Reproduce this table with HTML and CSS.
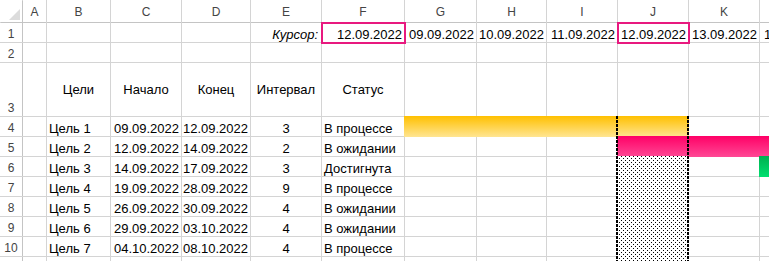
FILE: index.html
```html
<!DOCTYPE html>
<html lang="ru">
<head>
<meta charset="utf-8">
<title>Диаграмма Ганта</title>
<link rel="stylesheet" href="styles.css">
</head>
<body>
<div class="stack">
  <div class="sheet">
    <div class="c corner"><svg width="22" height="22" viewBox="0 0 22 22"><polygon points="9,20 20,20 20,9" fill="#dcdcdc"/></svg></div>
    <div class="c hd">A</div><div class="c hd">B</div><div class="c hd">C</div><div class="c hd">D</div><div class="c hd">E</div><div class="c hd">F</div><div class="c hd">G</div><div class="c hd">H</div><div class="c hd">I</div><div class="c hd">J</div><div class="c hd">K</div><div class="c hd">L</div>

    <div class="c rh">1</div><div class="c"></div><div class="c"></div><div class="c"></div><div class="c"></div>
    <div class="c r i">Курсор:</div><div class="c r sel">12.09.2022</div><div class="c r">09.09.2022</div><div class="c r">10.09.2022</div><div class="c r">11.09.2022</div><div class="c r sel">12.09.2022</div><div class="c r">13.09.2022</div><div class="c r">14.09.2022</div>

    <div class="c rh">2</div><div class="c"></div><div class="c"></div><div class="c"></div><div class="c"></div><div class="c"></div><div class="c"></div><div class="c"></div><div class="c"></div><div class="c"></div><div class="c"></div><div class="c"></div><div class="c"></div>

    <div class="c rh">3</div><div class="c"></div><div class="c ctr mid">Цели</div><div class="c ctr mid">Начало</div><div class="c ctr mid">Конец</div><div class="c ctr mid">Интервал</div><div class="c ctr mid">Статус</div><div class="c"></div><div class="c"></div><div class="c"></div><div class="c"></div><div class="c"></div><div class="c"></div>

    <div class="c rh">4</div><div class="c"></div><div class="c">Цель 1</div><div class="c r">09.09.2022</div><div class="c r">12.09.2022</div><div class="c ctr">3</div><div class="c">В процессе</div><div class="c"></div><div class="c"></div><div class="c"></div><div class="c"></div><div class="c"></div><div class="c"></div>

    <div class="c rh">5</div><div class="c"></div><div class="c">Цель 2</div><div class="c r">12.09.2022</div><div class="c r">14.09.2022</div><div class="c ctr">2</div><div class="c">В ожидании</div><div class="c"></div><div class="c"></div><div class="c"></div><div class="c"></div><div class="c"></div><div class="c"></div>

    <div class="c rh">6</div><div class="c"></div><div class="c">Цель 3</div><div class="c r">14.09.2022</div><div class="c r">17.09.2022</div><div class="c ctr">3</div><div class="c">Достигнута</div><div class="c"></div><div class="c"></div><div class="c"></div><div class="c"></div><div class="c"></div><div class="c"></div>

    <div class="c rh">7</div><div class="c"></div><div class="c">Цель 4</div><div class="c r">19.09.2022</div><div class="c r">28.09.2022</div><div class="c ctr">9</div><div class="c">В процессе</div><div class="c"></div><div class="c"></div><div class="c"></div><div class="c"></div><div class="c"></div><div class="c"></div>

    <div class="c rh">8</div><div class="c"></div><div class="c">Цель 5</div><div class="c r">26.09.2022</div><div class="c r">30.09.2022</div><div class="c ctr">4</div><div class="c">В ожидании</div><div class="c"></div><div class="c"></div><div class="c"></div><div class="c"></div><div class="c"></div><div class="c"></div>

    <div class="c rh">9</div><div class="c"></div><div class="c">Цель 6</div><div class="c r">29.09.2022</div><div class="c r">03.10.2022</div><div class="c ctr">4</div><div class="c">В ожидании</div><div class="c"></div><div class="c"></div><div class="c"></div><div class="c"></div><div class="c"></div><div class="c"></div>

    <div class="c rh">10</div><div class="c"></div><div class="c">Цель 7</div><div class="c r">04.10.2022</div><div class="c r">08.10.2022</div><div class="c ctr">4</div><div class="c">В процессе</div><div class="c"></div><div class="c"></div><div class="c"></div><div class="c"></div><div class="c"></div><div class="c"></div>

    <div class="c rh"></div><div class="c"></div><div class="c"></div><div class="c"></div><div class="c"></div><div class="c"></div><div class="c"></div><div class="c"></div><div class="c"></div><div class="c"></div><div class="c"></div><div class="c"></div><div class="c"></div>
  </div>

  <div class="overlay">
    <div class="bar bar-yellow"></div>
    <div class="bar bar-pink"></div>
    <div class="bar bar-green"></div>
    <div class="dots">
      <svg class="dots-svg" width="100%" height="100%" shape-rendering="crispEdges">
        <defs>
          <pattern id="p125" width="4" height="4" patternUnits="userSpaceOnUse">
            <rect x="0" y="0" width="1" height="1" fill="#000"/>
            <rect x="2" y="2" width="1" height="1" fill="#000"/>
          </pattern>
        </defs>
        <rect width="100%" height="100%" fill="#fff"/>
        <rect width="100%" height="100%" fill="url(#p125)"/>
      </svg>
    </div>
    <div class="dash"></div>
  </div>
</div>
</body>
</html>
```

FILE: styles.css
```css
html, body {
  margin: 0;
  padding: 0;
  background: #fff;
  overflow: hidden;
}

body {
  width: 769px;
  height: 261px;
  font-family: "Liberation Sans", Arial, sans-serif;
}

.stack {
  display: grid;
  width: max-content;
}

.sheet,
.overlay {
  grid-area: 1 / 1;
  display: grid;
  grid-template-columns: 22px 23px 63px 70px 68px 70px 82px 71px 69px 70px 70px 70px 71px;
  grid-template-rows: 22px 19px 19px 53px repeat(8, 19px);
  gap: 1px;
}

.sheet {
  background: #d4d4d4;
}

.overlay {
  pointer-events: none;
}

.c {
  background: #fff;
  font-size: 13px;
  line-height: 15px;
  color: #000;
  display: flex;
  align-items: flex-end;
  justify-content: flex-start;
  padding: 0 2px;
  white-space: nowrap;
  min-width: 0;
}

.r { justify-content: flex-end; }
.ctr { justify-content: center; }
.mid { align-items: center; }
.i { font-style: italic; padding-right: 3px; }

.corner {
  padding: 0;
  align-items: stretch;
  box-shadow: 1px 1px 0 #c4c4c4;
}

.hd {
  color: #444;
  font-size: 12px;
  justify-content: center;
  padding-bottom: 2px;
  box-shadow: 0 1px 0 #c4c4c4;
}

.rh {
  color: #444;
  font-size: 12px;
  justify-content: center;
  box-shadow: 1px 0 0 #c4c4c4;
}

.sel {
  position: relative;
}

.sel::after {
  content: "";
  position: absolute;
  left: -1px;
  top: -1px;
  right: -2px;
  bottom: -2px;
  border: 2px solid #e8197f;
  z-index: 2;
}

.bar {
  margin: -1px;
}

.bar-yellow {
  grid-row: 5;
  grid-column: 8 / 12;
  background: linear-gradient(#ffc000, #ffe592);
}

.bar-pink {
  grid-row: 6;
  grid-column: 11 / 14;
  background: linear-gradient(#ff0066, #ff4895);
}

.bar-green {
  grid-row: 7;
  grid-column: 13 / 14;
  background: linear-gradient(#00b050, #00e070);
}

.dots {
  grid-row: 7 / 13;
  grid-column: 11;
  margin: -1px -1px 0 -1px;
  background: #fff;
  overflow: hidden;
}

.dots-svg {
  display: block;
}

.dash {
  grid-row: 5 / 13;
  grid-column: 11;
  margin: -1px -1px 0 -2px;
  background:
    repeating-linear-gradient(#000 0 3px, transparent 3px 4px) left top / 2px 100% no-repeat,
    repeating-linear-gradient(#000 0 3px, transparent 3px 4px) right top / 2px 100% no-repeat;
}
```
